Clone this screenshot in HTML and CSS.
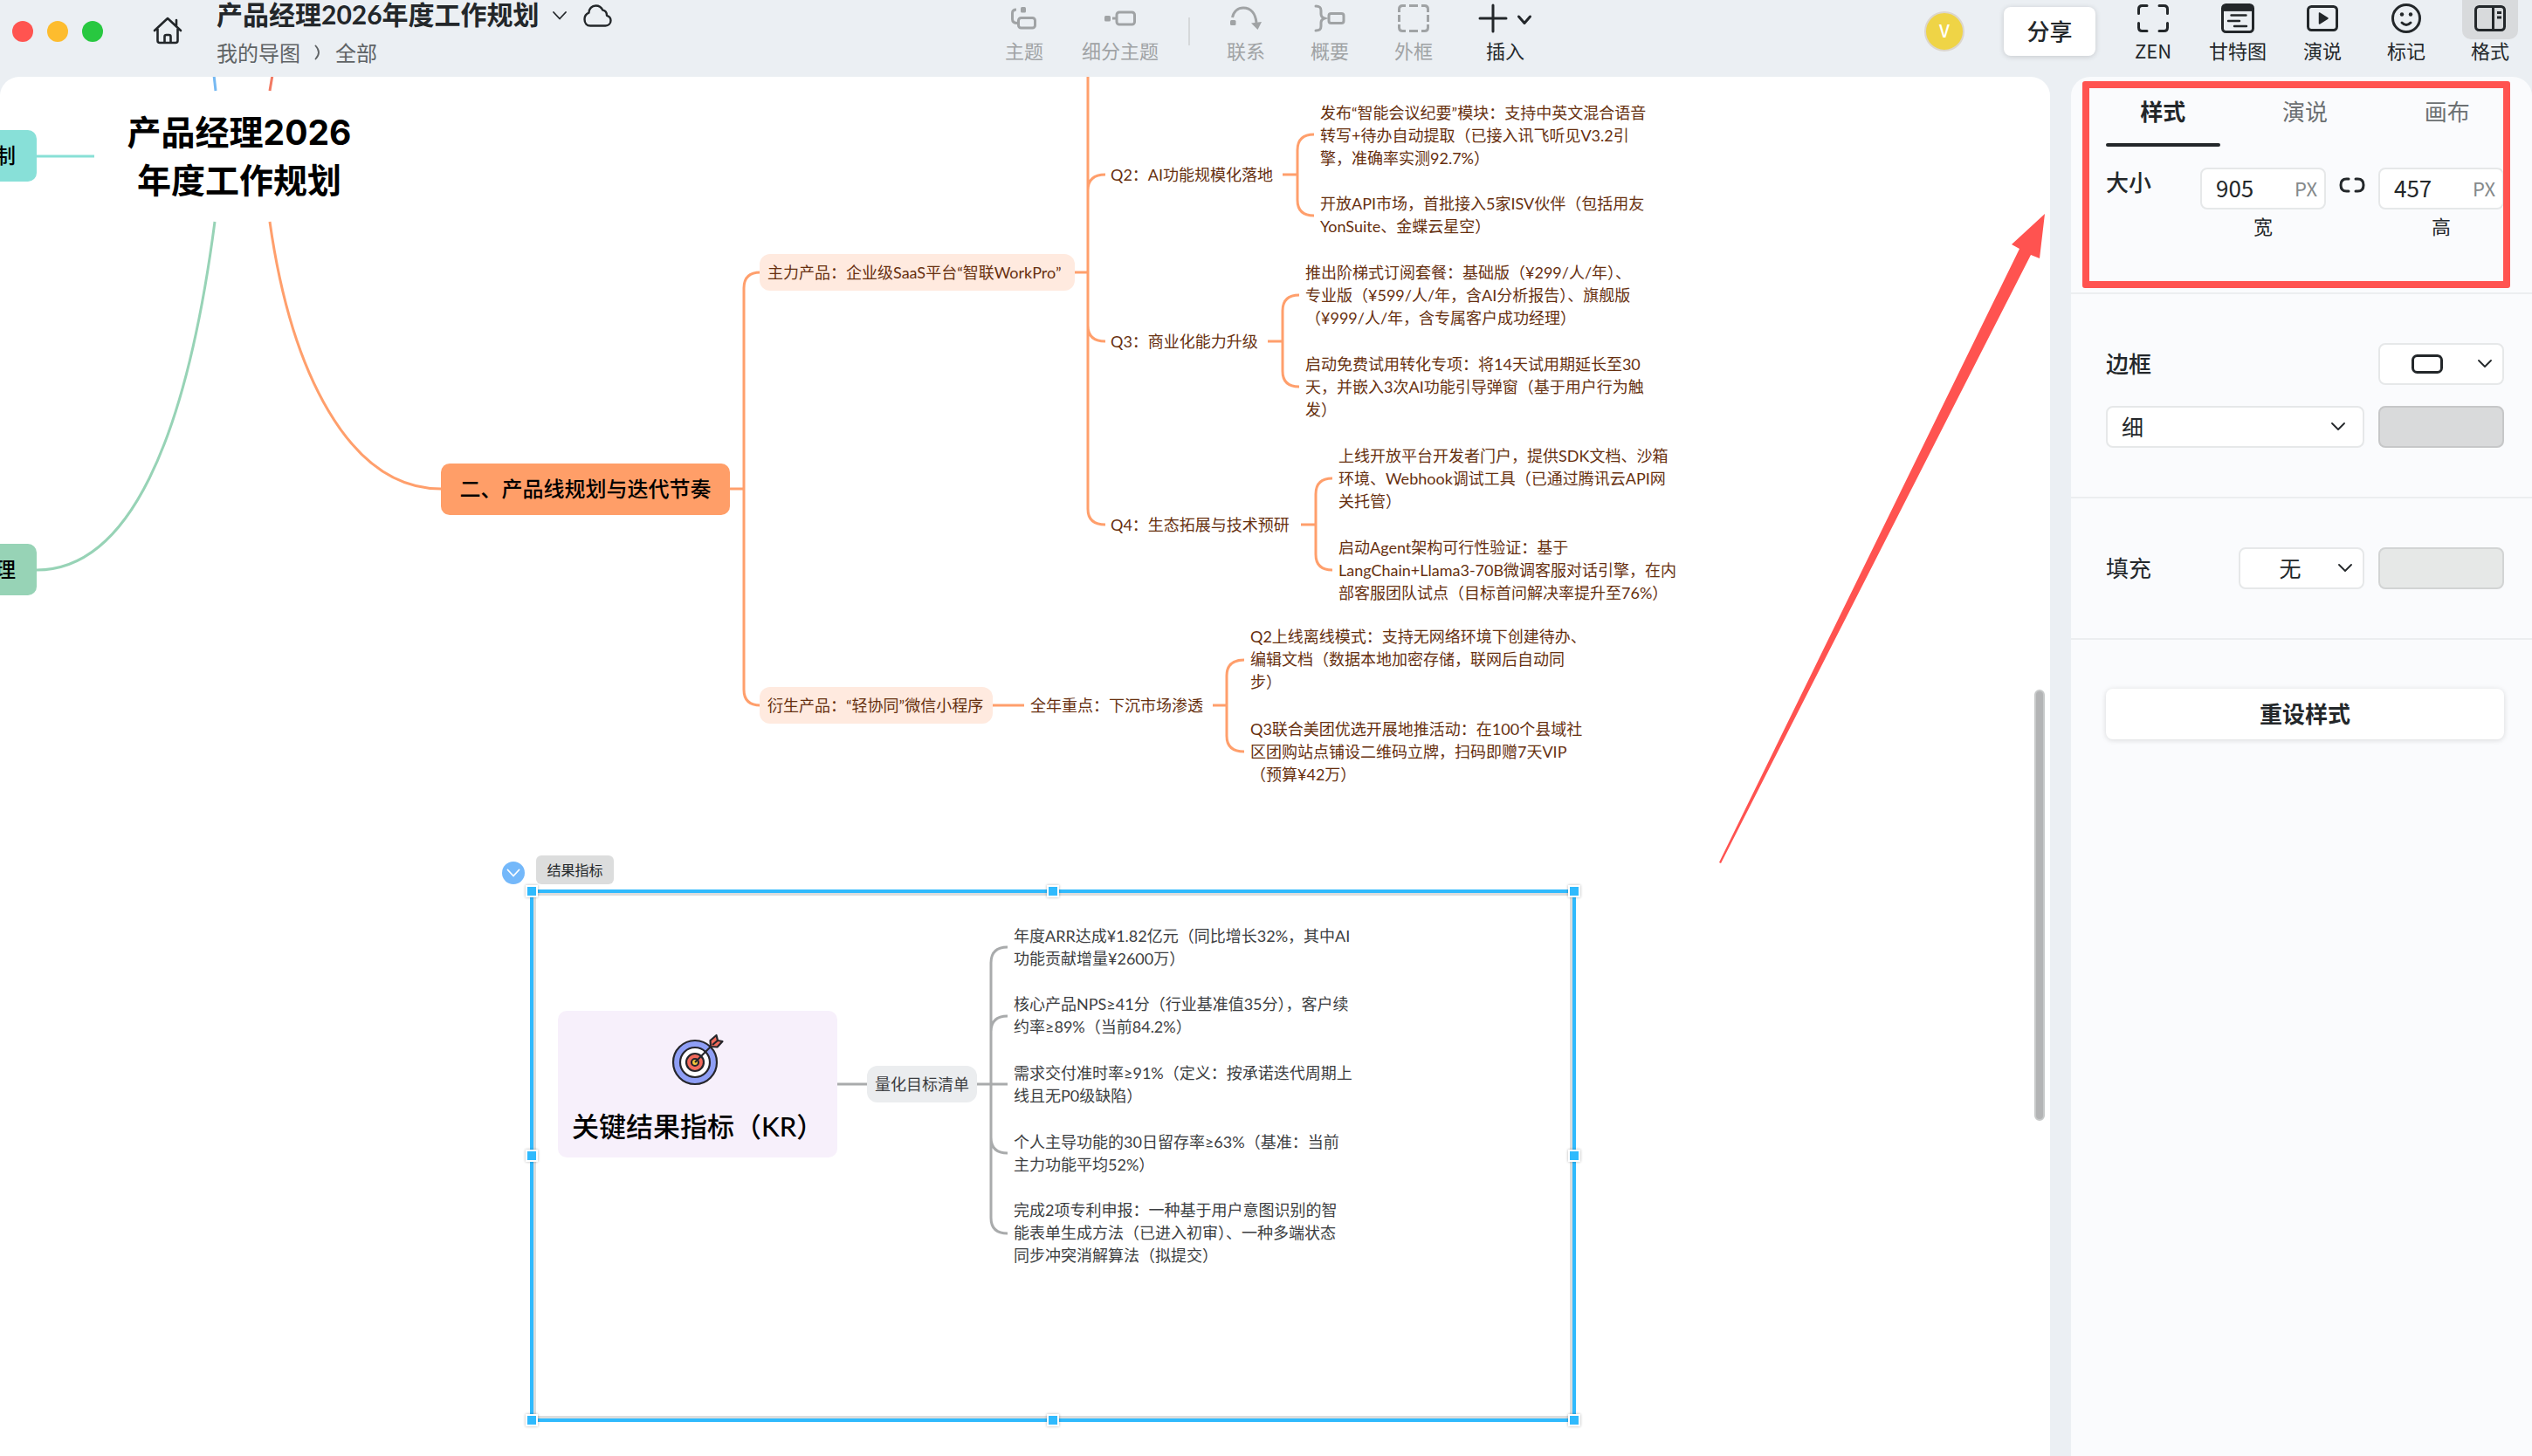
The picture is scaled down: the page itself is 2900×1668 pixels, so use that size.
FILE: index.html
```html
<!DOCTYPE html>
<html lang="zh-CN">
<head>
<meta charset="utf-8">
<meta name="viewport" content="width=device-width, initial-scale=1">
<title>产品经理2026年度工作规划</title>
<link rel="stylesheet" href="styles.css">
</head>
<body>
<div class="app">
  <header class="topbar">
    <div class="doc">
      <div class="lights">
        <span class="light light-close"></span>
        <span class="light light-min"></span>
        <span class="light light-max"></span>
      </div>
      <button class="home" type="button">
        <svg width="36" height="34" viewBox="0 0 36 34" fill="none" stroke="#23272a" stroke-width="2.6" stroke-linecap="round" stroke-linejoin="round">
          <path d="M3 17 18 3l15 14M28 12V5M6.500 15v13.500q0 2.500 2.500 2.500h18q2.500 0 2.500-2.500V15M14.500 31v-7q0-2 2-2h3q2 0 2 2v7"/>
        </svg>
      </button>
      <div class="doc-text">
        <div class="doc-title">
          <h1>产品经理2026年度工作规划</h1>
          <svg width="16" height="10" viewBox="0 0 16 10" fill="none" stroke="#23272a" stroke-width="1.800" stroke-linecap="round" stroke-linejoin="round"><path d="M1 1l7 7.500L15 1"/></svg>
          <svg class="cloud" width="33" height="26" viewBox="0 0 33 26" fill="none" stroke="#23272a" stroke-width="2.400" stroke-linejoin="round"><path d="M8 24.500h17.500c3.500 0 6-2.700 6-6 0-3-1.800-5-4.500-5.700C27 9.500 25.200 7 22.300 6.600 20.600 3 17.600 1.500 14.400 1.500c-4.600 0-7.900 3.700-8 8.200C3.300 11 1.500 13.700 1.500 17c0 4.400 2.500 7.500 6.500 7.500z"/></svg>
        </div>
        <nav class="crumbs">
          <a href="#maps">我的导图</a>
          <svg width="8" height="18" viewBox="0 0 8 18" fill="none" stroke="#5f6365" stroke-width="1.800" stroke-linecap="round"><path d="M1.500 1.500Q8.500 9 1.500 16.500"/></svg>
          <a href="#all">全部</a>
        </nav>
      </div>
    </div>

    <div class="toolbar">
      <div class="tools tools-topic">
        <button class="tool tool-off" type="button">
          <span class="tool-icon"><svg width="30" height="28" viewBox="0 0 30 28" fill="none" stroke="#a0a3a5" stroke-width="3"><rect x="8.500" y="13.500" width="19" height="11.500" rx="3"/><path d="M6 4C3 4 1.500 5 1.500 8v7c0 3 1.500 4.500 6 4.500"/><rect x="11" y="1" width="6" height="6.500" rx="1.500" fill="#a0a3a5" stroke="none"/></svg></span>
          <span>主题</span>
        </button>
        <button class="tool tool-off" type="button">
          <span class="tool-icon"><svg width="36" height="18" viewBox="0 0 36 18" fill="none" stroke="#a0a3a5" stroke-width="3"><rect x="14" y="2" width="20.500" height="14" rx="3"/><path d="M9 9h5"/><rect x="0" y="6" width="7" height="6.500" rx="1.500" fill="#a0a3a5" stroke="none"/></svg></span>
          <span>细分主题</span>
        </button>
      </div>
      <span class="tool-divider"></span>
      <div class="tools tools-extra">
        <button class="tool tool-off" type="button">
          <span class="tool-icon"><svg width="36" height="28" viewBox="0 0 36 28" fill="none" stroke="#a0a3a5" stroke-width="3"><path d="M2.500 13C4 6 9 2 15 2c9 0 14 7 15 17"/><path d="M24 19.500l12-1.500-4.500 9z" fill="#a0a3a5" stroke="none"/><rect x="0" y="16" width="6.500" height="6" rx="1.500" fill="#a0a3a5" stroke="none"/></svg></span>
          <span>联系</span>
        </button>
        <button class="tool tool-off" type="button">
          <span class="tool-icon"><svg width="36" height="32" viewBox="0 0 36 32" fill="none" stroke="#a0a3a5" stroke-width="3" stroke-linecap="round"><path d="M2 2c4 0 6 1 6 5v4c0 3 1 4 4 5-3 1-4 2-4 5v4c0 4-2 5-6 5"/><rect x="17" y="10.500" width="17" height="11" rx="2.500"/></svg></span>
          <span>概要</span>
        </button>
        <button class="tool tool-off" type="button">
          <span class="tool-icon"><svg width="36" height="32" viewBox="0 0 36 32" fill="none" stroke="#a0a3a5" stroke-width="3"><path d="M1.500 9V5.500q0-4 4-4H9M27 1.500h3.500q4 0 4 4V9M34.500 23v3.500q0 4-4 4H27M9 30.500H5.500q-4 0-4-4V23M13 1.500h10M13 30.500h10M1.500 12v8M34.500 12v8"/></svg></span>
          <span>外框</span>
        </button>
        <button class="tool" type="button">
          <span class="tool-icon"><svg width="62" height="34" viewBox="0 0 62 34" fill="none" stroke="#23272a" stroke-width="3" stroke-linecap="round" stroke-linejoin="round"><path d="M17 2v30M2 17h30M46.500 15l6.500 7.500L59.500 15"/></svg></span>
          <span>插入</span>
        </button>
      </div>
    </div>

    <div class="actions">
      <span class="avatar">V</span>
      <button class="share" type="button">分享</button>
      <div class="views">
        <button class="tool" type="button">
          <span class="tool-icon"><svg width="36" height="32" viewBox="0 0 36 32" fill="none" stroke="#23272a" stroke-width="3" stroke-linecap="round"><path d="M1.500 10.500v-5q0-4 4-4H11M25 1.500h5.500q4 0 4 4v5M34.500 21.500v5q0 4-4 4H25M11 30.500H5.500q-4 0-4-4v-5"/></svg></span>
          <span>ZEN</span>
        </button>
        <button class="tool" type="button">
          <span class="tool-icon"><svg width="38" height="34" viewBox="0 0 38 34" fill="none" stroke="#23272a" stroke-width="3" stroke-linecap="round"><rect x="1.500" y="1.500" width="35" height="31" rx="4"/><path d="M2 8V5q0-3 3-3h28q3 0 3 3v3z" fill="#23272a" stroke-width="1"/><path stroke-width="2.400" d="M11.500 13.500h17M8 20h13M15 26h14"/></svg></span>
          <span>甘特图</span>
        </button>
        <button class="tool" type="button">
          <span class="tool-icon"><svg width="36" height="30" viewBox="0 0 36 30" fill="none" stroke="#23272a" stroke-width="3"><rect x="1.500" y="1.500" width="33" height="27" rx="4"/><path d="M14.500 9v12l9.500-6z" fill="#23272a" stroke-width="1.500" stroke-linejoin="round"/></svg></span>
          <span>演说</span>
        </button>
        <button class="tool" type="button">
          <span class="tool-icon"><svg width="34" height="34" viewBox="0 0 34 34" fill="none" stroke="#23272a" stroke-width="3" stroke-linecap="round"><circle cx="17" cy="17" r="15.500"/><path d="M12 22q5 5 10 0"/><circle cx="12" cy="12.500" r="2.200" fill="#23272a" stroke="none"/><circle cx="22" cy="12.500" r="2.200" fill="#23272a" stroke="none"/></svg></span>
          <span>标记</span>
        </button>
        <button class="tool tool-active" type="button">
          <span class="tool-icon"><svg width="36" height="30" viewBox="0 0 36 30" fill="none" stroke="#23272a" stroke-width="3"><rect x="1.500" y="1.500" width="33" height="27" rx="4"/><path d="M21.500 2v26M26 8.500h5M26 14h5"/></svg></span>
          <span>格式</span>
        </button>
      </div>
    </div>
  </header>

  <div class="workspace">
    <main class="canvas">
      <svg class="links" width="2348" height="1580" viewBox="0 88 2348 1580" fill="none" stroke-width="3">
        <path stroke="#76b9f2" d="M245 86l2 18"/>
        <path stroke="#f27a63" d="M312 86l-3 18"/>
        <path stroke="#88e0d6" d="M42 179h66"/>
        <path stroke="#97d3b6" d="M42 653C147 653 213 506 246 254"/>
        <g stroke="#ff9f6c">
          <path d="M309 254C333 424 399 560 505 560"/>
          <path d="M836 560h16M871 312q-19 0-19 18v460q0 18 19 18"/>
          <path d="M1231 312h15M1246 88v495q0 18 20 18M1266 200q-20 0-20 18v155q0 18 20 18"/>
          <path d="M1469 200h17M1505 154q-19 0-19 18v57q0 18 19 18"/>
          <path d="M1452 391h17M1488 338q-19 0-19 18v69q0 18 19 18"/>
          <path d="M1490 601h17M1526 548q-19 0-19 18v69q0 18 19 18"/>
          <path d="M1137 808h36M1389 808h16M1425 756q-20 0-20 18v69q0 18 20 18"/>
        </g>
        <g stroke="#a9abac">
          <path d="M959 1242h34M1119 1242h35M1154 1085q-19 0-19 18v292q0 18 19 18M1154 1164q-19 0-19 18v121q0 18 19 18"/>
        </g>
      </svg>

      <div class="node root">产品经理2026<br>年度工作规划</div>
      <div class="node main-topic mechanism">制</div>
      <div class="node main-topic risk">理</div>
      <div class="node main-topic product">二、产品线规划与迭代节奏</div>

      <div class="node sub-topic flagship">主力产品：企业级SaaS平台“智联WorkPro”</div>
      <div class="node sub-topic derived">衍生产品：“轻协同”微信小程序</div>

      <div class="node leaf q2">Q2：AI功能规模化落地</div>
      <div class="node leaf q3">Q3：商业化能力升级</div>
      <div class="node leaf q4">Q4：生态拓展与技术预研</div>
      <div class="node leaf focus">全年重点：下沉市场渗透</div>

      <div class="node leaf q2-minutes">发布“智能会议纪要”模块：支持中英文混合语音<br>转写+待办自动提取（已接入讯飞听见V3.2引<br>擎，准确率实测92.7%）</div>
      <div class="node leaf q2-api">开放API市场，首批接入5家ISV伙伴（包括用友<br>YonSuite、金蝶云星空）</div>
      <div class="node leaf q3-plans">推出阶梯式订阅套餐：基础版（¥299/人/年）、<br>专业版（¥599/人/年，含AI分析报告）、旗舰版<br>（¥999/人/年，含专属客户成功经理）</div>
      <div class="node leaf q3-trial">启动免费试用转化专项：将14天试用期延长至30<br>天，并嵌入3次AI功能引导弹窗（基于用户行为触<br>发）</div>
      <div class="node leaf q4-portal">上线开放平台开发者门户，提供SDK文档、沙箱<br>环境、Webhook调试工具（已通过腾讯云API网<br>关托管）</div>
      <div class="node leaf q4-agent">启动Agent架构可行性验证：基于<br>LangChain+Llama3-70B微调客服对话引擎，在内<br>部客服团队试点（目标首问解决率提升至76%）</div>
      <div class="node leaf focus-offline">Q2上线离线模式：支持无网络环境下创建待办、<br>编辑文档（数据本地加密存储，联网后自动同<br>步）</div>
      <div class="node leaf focus-promo">Q3联合美团优选开展地推活动：在100个县域社<br>区团购站点铺设二维码立牌，扫码即赠7天VIP<br>（预算¥42万）</div>

      <button class="collapse" type="button">
        <svg width="16" height="10" viewBox="0 0 16 10" fill="none" stroke="#fff" stroke-width="1.800" stroke-linecap="round" stroke-linejoin="round"><path d="M1.500 1.500L8 8.500l6.500-7"/></svg>
      </button>
      <div class="frame-label">结果指标</div>
      <div class="frame">
        <i class="handle top left"></i><i class="handle top center"></i><i class="handle top right"></i>
        <i class="handle middle left"></i><i class="handle middle right"></i>
        <i class="handle bottom left"></i><i class="handle bottom center"></i><i class="handle bottom right"></i>
      </div>

      <div class="node kr">
        <svg width="66" height="60" viewBox="3 0 66 60" stroke="#26262b" stroke-width="2.200" stroke-linejoin="round">
          <circle cx="33" cy="33" r="25" fill="#8f9ff5"/>
          <circle cx="33" cy="33" r="17" fill="#fff"/>
          <circle cx="33" cy="33" r="10" fill="#f26a5b"/>
          <circle cx="33" cy="33" r="4" fill="#f5c83c"/>
          <path d="M33 33L53 13" fill="none"/>
          <path d="M51 15l-.5-7L57.500 2l1.500 6 5.500 1-6 6.500z" fill="#f26a5b"/>
          <path d="M53 13l6-5" fill="none"/>
        </svg>
        <span>关键结果指标（KR）</span>
      </div>
      <div class="node sub-topic targets">量化目标清单</div>
      <div class="node leaf gray arr">年度ARR达成¥1.82亿元（同比增长32%，其中AI<br>功能贡献增量¥2600万）</div>
      <div class="node leaf gray nps">核心产品NPS≥41分（行业基准值35分），客户续<br>约率≥89%（当前84.2%）</div>
      <div class="node leaf gray delivery">需求交付准时率≥91%（定义：按承诺迭代周期上<br>线且无P0级缺陷）</div>
      <div class="node leaf gray retention">个人主导功能的30日留存率≥63%（基准：当前<br>主力功能平均52%）</div>
      <div class="node leaf gray patents">完成2项专利申报：一种基于用户意图识别的智<br>能表单生成方法（已进入初审）、一种多端状态<br>同步冲突消解算法（拟提交）</div>

      <svg class="arrow" width="376" height="746" viewBox="1968 244 376 746"><path fill="#ff5350" d="M1969 988L2313 285l-9-5 38-35-6 51-10-4L1971 989z"/></svg>
      <div class="scroll-thumb"></div>
    </main>

    <aside class="panel">
      <div class="tabs" role="tablist">
        <button class="tab tab-active" type="button" role="tab" aria-selected="true">样式</button>
        <button class="tab" type="button" role="tab" aria-selected="false">演说</button>
        <button class="tab" type="button" role="tab" aria-selected="false">画布</button>
      </div>

      <section class="section size">
        <h2>大小</h2>
        <div class="field">
          <div class="number"><input id="size-w" type="text" value="905"><span>PX</span></div>
          <label for="size-w">宽</label>
        </div>
        <button class="lock" type="button">
          <svg width="30" height="18" viewBox="0 0 30 18" fill="none" stroke="#23272a" stroke-width="3" stroke-linecap="round"><path d="M11 2H8.500Q2 2 2 9t6.500 7H11M19 2h2.500Q28 2 28 9t-6.500 7H19"/></svg>
        </button>
        <div class="field">
          <div class="number"><input id="size-h" type="text" value="457"><span>PX</span></div>
          <label for="size-h">高</label>
        </div>
      </section>

      <section class="section">
        <div class="row">
          <h2>边框</h2>
          <button class="picker" type="button" aria-haspopup="listbox">
            <svg width="36" height="22" viewBox="0 0 36 22" fill="none" stroke="#23272a" stroke-width="3"><rect x="1.500" y="1.500" width="33" height="19" rx="5"/></svg>
            <svg width="16" height="10" viewBox="0 0 16 10" fill="none" stroke="#23272a" stroke-width="1.800" stroke-linecap="round" stroke-linejoin="round"><path d="M1 1l7 7 7-7"/></svg>
          </button>
        </div>
        <div class="row">
          <div class="select select-wide">
            <select id="border-width"><option>细</option></select>
            <svg width="16" height="10" viewBox="0 0 16 10" fill="none" stroke="#23272a" stroke-width="1.800" stroke-linecap="round" stroke-linejoin="round"><path d="M1 1l7 7 7-7"/></svg>
          </div>
          <button class="swatch swatch-border" type="button"></button>
        </div>
      </section>

      <section class="section">
        <div class="row">
          <label class="fill-label" for="fill">填充</label>
          <div class="select select-small">
            <select id="fill"><option>无</option></select>
            <svg width="16" height="10" viewBox="0 0 16 10" fill="none" stroke="#23272a" stroke-width="1.800" stroke-linecap="round" stroke-linejoin="round"><path d="M1 1l7 7 7-7"/></svg>
          </div>
          <button class="swatch swatch-fill" type="button"></button>
        </div>
      </section>

      <section class="section">
        <button class="reset" type="button">重设样式</button>
      </section>

      <div class="highlight"></div>
    </aside>
  </div>
</div>
</body>
</html>
```
FILE: styles.css
```css
* {
  box-sizing: border-box;
}

body {
  margin: 0;
  background: #ebeff3;
  color: #23272a;
  font-family: "Noto Sans CJK SC", sans-serif;
  font-size: 22px;
}

h1,
h2 {
  margin: 0;
  font-weight: 500;
}

button,
input,
select {
  margin: 0;
  padding: 0;
  border: 0;
  background: none;
  color: inherit;
  font: inherit;
}

svg {
  display: block;
  flex: none;
}

.app {
  display: flex;
  flex-direction: column;
  min-height: 100vh;
  overflow: hidden;
}

/* Top bar */

.topbar {
  display: grid;
  grid-template-columns: 1fr auto 1fr;
  height: 88px;
}

.doc {
  display: flex;
  padding-left: 14px;
}

.lights {
  display: flex;
  gap: 16px;
  padding-top: 24px;
}

.light {
  width: 24px;
  height: 24px;
  border-radius: 50%;
}

.light-close {
  background: #ff5450;
}

.light-min {
  background: #fdbc2e;
}

.light-max {
  background: #28c840;
}

.home {
  align-self: flex-start;
  margin: 18px 38px 0 56px;
}

.doc-title {
  display: flex;
  align-items: center;
  height: 36px;
  gap: 15px;
}

.doc-title h1 {
  padding-bottom: 4px;
  font-family: Lato, "Noto Sans CJK SC", sans-serif;
  font-size: 30px;
  font-weight: 700;
  line-height: 32px;
  white-space: nowrap;
}

.cloud {
  margin-left: 4px;
}

.crumbs {
  display: flex;
  align-items: center;
  gap: 16px;
  margin-top: 10px;
  font-size: 24px;
  line-height: 28px;
}

.crumbs a {
  color: #5f6365;
  text-decoration: none;
}

.toolbar {
  display: flex;
  padding-left: 6px;
}

.tools {
  display: flex;
}

.tools-topic {
  gap: 44px;
}

.tools-extra {
  gap: 52px;
}

.tool-divider {
  width: 2px;
  height: 32px;
  margin: 20px 42px 0 34px;
  background: #d5d8da;
}

.tool {
  display: flex;
  flex-direction: column;
  align-items: center;
  align-self: flex-start;
  min-width: 44px;
  line-height: 25px;
  white-space: nowrap;
}

.tool-off {
  color: #a0a3a5;
}

.tool-icon {
  display: flex;
  align-items: center;
  justify-content: center;
  width: 100%;
  height: 45px;
  padding-bottom: 3px;
}

.actions {
  display: flex;
  justify-content: flex-end;
  padding-right: 16px;
}

.avatar {
  width: 46px;
  height: 46px;
  margin: 13px 45px 0 0;
  border: 2px solid #dcd6cc;
  border-radius: 50%;
  background: #efd446;
  color: #fff;
  font-size: 20px;
  font-weight: 500;
  line-height: 40px;
  text-align: center;
}

.share {
  width: 105px;
  height: 56px;
  margin: 8px 34px 0 0;
  padding-bottom: 3px;
  border-radius: 8px;
  background: #fff;
  box-shadow: 0 1px 6px rgba(0, 0, 0, 0.16);
  font-size: 26px;
  font-weight: 500;
}

.views {
  display: flex;
  gap: 32px;
}

.views .tool {
  min-width: 64px;
}

.tool-active .tool-icon {
  border-radius: 0 0 10px 10px;
  background: #d8dadc;
}

/* Canvas */

.workspace {
  display: flex;
  flex: 1;
  gap: 24px;
}

.canvas {
  position: relative;
  flex: 1;
  min-width: 0;
  overflow: hidden;
  border-radius: 22px 22px 0 0;
  background: #fff;
}

.links {
  position: absolute;
  top: 0;
  left: 0;
}

.node {
  position: absolute;
  font-family: Lato, "Noto Sans CJK SC", sans-serif;
  white-space: nowrap;
}

.root {
  top: 36px;
  left: 144px;
  width: 260px;
  color: #000;
  font-family: Inter, "Noto Sans CJK SC", sans-serif;
  font-size: 39px;
  font-weight: 700;
  line-height: 55px;
  text-align: center;
}

.main-topic {
  height: 59px;
  padding: 0 24px;
  border-radius: 10px;
  color: #000;
  font-size: 24px;
  font-weight: 500;
  line-height: 58px;
}

.mechanism {
  top: 61px;
  left: -30px;
  background: #88e0d8;
}

.risk {
  top: 535px;
  left: -30px;
  background: #97d3b6;
}

.product {
  top: 443px;
  left: 505px;
  width: 331px;
  padding: 0;
  background: #ff9e68;
  text-align: center;
}

.sub-topic {
  height: 42px;
  padding-left: 9px;
  border-radius: 12px;
  background: #ffeadf;
  color: #67300f;
  font-size: 18px;
  line-height: 42px;
}

.flagship {
  top: 203px;
  left: 870px;
  width: 361px;
}

.derived {
  top: 699px;
  left: 870px;
  width: 267px;
}

.targets {
  top: 1133px;
  left: 993px;
  width: 126px;
  background: #ebedef;
  color: #3c3e41;
}

.leaf {
  color: #67300f;
  font-size: 18px;
  line-height: 26px;
}

.gray {
  left: 1161px;
  color: #3c3e41;
}

.q2 {
  top: 99px;
  left: 1272px;
}

.q3 {
  top: 290px;
  left: 1272px;
}

.q4 {
  top: 500px;
  left: 1272px;
}

.focus {
  top: 707px;
  left: 1180px;
}

.q2-minutes {
  top: 28px;
  left: 1512px;
}

.q2-api {
  top: 132px;
  left: 1512px;
}

.q3-plans {
  top: 211px;
  left: 1495px;
}

.q3-trial {
  top: 316px;
  left: 1495px;
}

.q4-portal {
  top: 421px;
  left: 1533px;
}

.q4-agent {
  top: 526px;
  left: 1533px;
}

.focus-offline {
  top: 628px;
  left: 1432px;
}

.focus-promo {
  top: 734px;
  left: 1432px;
}

.arr {
  top: 971px;
}

.nps {
  top: 1049px;
}

.delivery {
  top: 1128px;
}

.retention {
  top: 1207px;
}

.patents {
  top: 1285px;
}

.collapse {
  position: absolute;
  top: 899px;
  left: 575px;
  display: flex;
  align-items: center;
  justify-content: center;
  width: 26px;
  height: 26px;
  border-radius: 50%;
  background: #74b8fa;
}

.frame-label {
  position: absolute;
  top: 892px;
  left: 614px;
  width: 89px;
  height: 33px;
  border-radius: 6px;
  background: #dcdddd;
  font-size: 16px;
  line-height: 33px;
  text-align: center;
}

.frame {
  position: absolute;
  top: 931px;
  left: 607px;
  width: 1198px;
  height: 610px;
  border: 4px solid #30bafd;
  box-shadow: inset 0 0 0 3px #dcdddd;
}

.handle {
  position: absolute;
  width: 14px;
  height: 14px;
  border: 2px solid #fff;
  background: #30bafd;
  box-shadow: 0 0 3px rgba(0, 0, 0, 0.3);
}

.handle.top {
  top: -9px;
}

.handle.middle {
  top: calc(50% - 7px);
}

.handle.bottom {
  bottom: -9px;
}

.handle.left {
  left: -9px;
}

.handle.center {
  left: calc(50% - 7px);
}

.handle.right {
  right: -9px;
}

.kr {
  top: 1070px;
  left: 639px;
  display: flex;
  flex-direction: column;
  align-items: center;
  gap: 17px;
  width: 320px;
  height: 168px;
  padding-top: 26px;
  border-radius: 10px;
  background: #f7f0fb;
  color: #000;
  font-size: 31px;
  font-weight: 500;
  line-height: 58px;
}

.kr span {
  align-self: flex-start;
  padding-left: 16px;
}

.arrow {
  position: absolute;
  top: 156px;
  left: 1968px;
}

.scroll-thumb {
  position: absolute;
  top: 702px;
  right: 6px;
  width: 12px;
  height: 494px;
  border: 2px solid #c7c9c9;
  border-radius: 6px;
  background: #b3b4b5;
}

/* Format panel */

.panel {
  position: relative;
  width: 528px;
  border-radius: 22px 22px 0 0;
  background: #fafbfd;
}

.tabs {
  display: grid;
  grid-template-columns: repeat(3, 1fr);
  gap: 32px;
  height: 80px;
  padding: 0 32px 0 40px;
}

.tab {
  position: relative;
  padding-bottom: 4px;
  color: #6c7072;
  font-size: 26px;
}

.tab-active {
  color: #23272a;
  font-weight: 700;
}

.tab-active::after {
  content: "";
  position: absolute;
  right: 0;
  bottom: 0;
  left: 0;
  height: 4px;
  border-radius: 2px;
  background: #23272a;
}

.section {
  display: flex;
  flex-direction: column;
  gap: 24px;
  padding: 56px 32px 56px 40px;
}

.section + .section {
  border-top: 2px solid #eceef0;
}

.section h2,
.fill-label {
  flex: 1;
  padding-bottom: 3px;
  font-size: 26px;
  line-height: 34px;
}

.size {
  flex-direction: row;
  gap: 0;
  padding: 24px 32px 61px 40px;
}

.size h2 {
  line-height: 32px;
}

.field {
  width: 144px;
  text-align: center;
}

.field label {
  display: block;
  margin-top: 4px;
  padding-bottom: 2px;
  line-height: 28px;
}

.number {
  display: flex;
  align-items: center;
  height: 48px;
  padding: 0 8px 3px 16px;
  border: 2px solid #e6e8e9;
  border-radius: 8px;
  background: #fff;
}

.number input {
  flex: 1;
  min-width: 0;
  font-size: 26px;
}

.number span {
  color: #85898b;
}

.lock {
  display: flex;
  align-items: center;
  justify-content: center;
  width: 60px;
  height: 40px;
}

.row {
  display: flex;
  align-items: center;
  gap: 16px;
}

.picker,
.select select,
.swatch {
  width: 144px;
  height: 48px;
  border: 2px solid #e6e8e9;
  border-radius: 8px;
  background: #fff;
}

.picker {
  display: flex;
  align-items: center;
  justify-content: space-between;
  padding: 0 12px 0 36px;
}

.select {
  position: relative;
}

.select select {
  width: 100%;
  appearance: none;
  font-size: 25px;
}

.select svg {
  position: absolute;
  top: 19px;
  right: 14px;
  pointer-events: none;
}

.select-wide {
  flex: 1;
}

.select-wide select {
  padding: 0 40px 2px 16px;
}

.select-wide svg {
  right: 22px;
}

.select-small {
  width: 144px;
}

.select-small select {
  padding: 0 40px 2px 14px;
  text-align-last: center;
}

.swatch-border {
  border-color: #c6c7c8;
  background: #d9dadb;
}

.swatch-fill {
  border-color: #d2d4d4;
  background: #e6e8e7;
}

.reset {
  height: 58px;
  padding-bottom: 4px;
  border-radius: 8px;
  background: #fff;
  box-shadow: 0 1px 6px rgba(0, 0, 0, 0.14);
  font-size: 26px;
  font-weight: 700;
}

.highlight {
  position: absolute;
  top: 5px;
  right: 25px;
  left: 13px;
  height: 237px;
  border: 8px solid #ff5350;
  border-radius: 3px;
  pointer-events: none;
}
```
